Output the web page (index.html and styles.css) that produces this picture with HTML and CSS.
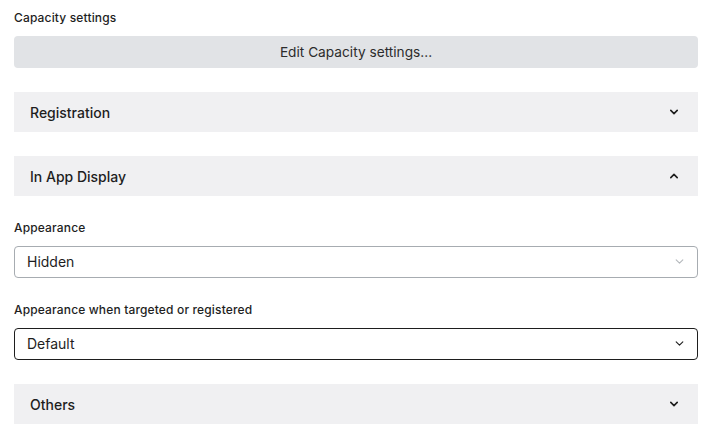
FILE: index.html
```html
<!DOCTYPE html>
<html lang="en">
<head>
  <meta charset="UTF-8" />
  <title>Event settings</title>
  <link rel="stylesheet" href="styles.css">
</head>
<body>
  <main class="settings">
    <!-- Capacity -->
    <div class="field">
      <label class="field-label">Capacity settings</label>
      <button class="btn-secondary" type="button">Edit Capacity settings...</button>
    </div>

    <section class="panel">
      <div class="panel-head">
        <span>Registration</span>
        <svg class="chev" viewBox="0 0 10 6"><path d="M1 1l4 4 4-4"/></svg>
      </div>
    </section>

    <section class="panel is-open">
      <div class="panel-head">
        <span>In App Display</span>
        <svg class="chev" viewBox="0 0 10 6"><path d="M1 5l4-4 4 4"/></svg>
      </div>
      <div class="panel-body">
        <div class="field">
          <label class="field-label">Appearance</label>
          <div class="select is-muted">
            <span>Hidden</span>
            <svg class="chev-sm" viewBox="0 0 10 6"><path d="M1 1l4 4 4-4"/></svg>
          </div>
        </div>
        <div class="field">
          <label class="field-label">Appearance when targeted or registered</label>
          <div class="select">
            <span>Default</span>
            <svg class="chev-sm" viewBox="0 0 10 6"><path d="M1 1l4 4 4-4"/></svg>
          </div>
        </div>
      </div>
    </section>

    <section class="panel">
      <div class="panel-head">
        <span>Others</span>
        <svg class="chev" viewBox="0 0 10 6"><path d="M1 1l4 4 4-4"/></svg>
      </div>
    </section>
  </main>
</body>
</html>
```

FILE: styles.css
```css
html,body{margin:0;background:#fff;color:#1e1e1e;font-family:Inter,"Noto Sans",sans-serif}
.settings{padding:10px 12px 0 14px}

.field{margin-bottom:24px}
.field-label{display:block;font-size:12px;line-height:16px;font-weight:500;letter-spacing:0.15px;margin-bottom:10px;color:#1e1e1e}

.btn-secondary{display:block;width:100%;height:32px;border:0;border-radius:4px;background:#e1e3e6;color:#2c2c2c;font:400 13.7px/32px Inter,"Noto Sans",sans-serif;text-align:center;padding:0}

.panel{margin-bottom:24px}
.panel-head{height:40px;background:#f0f0f2;display:flex;align-items:center;justify-content:space-between;padding:0 20px 0 16px;font-size:14px;font-weight:500;color:#1e1e1e}
.chev{width:8px;height:6px;fill:none;stroke:#1e1e1e;stroke-width:2;stroke-linecap:round;stroke-linejoin:round}
.panel-body{padding-top:24px}
.panel-body .field:last-child{margin-bottom:0}

.select{height:32px;box-sizing:border-box;border:1px solid #1e1e1e;border-radius:4px;display:flex;align-items:center;justify-content:space-between;padding:0 13px 1px 12px;font-size:14px;color:#1e1e1e}
.select.is-muted{border-color:#a7acb1}
.chev-sm{width:9px;height:5px;fill:none;stroke:#1e1e1e;stroke-width:1.3;stroke-linecap:round;stroke-linejoin:round}
.is-muted .chev-sm{stroke:#b4b8bc}
```
